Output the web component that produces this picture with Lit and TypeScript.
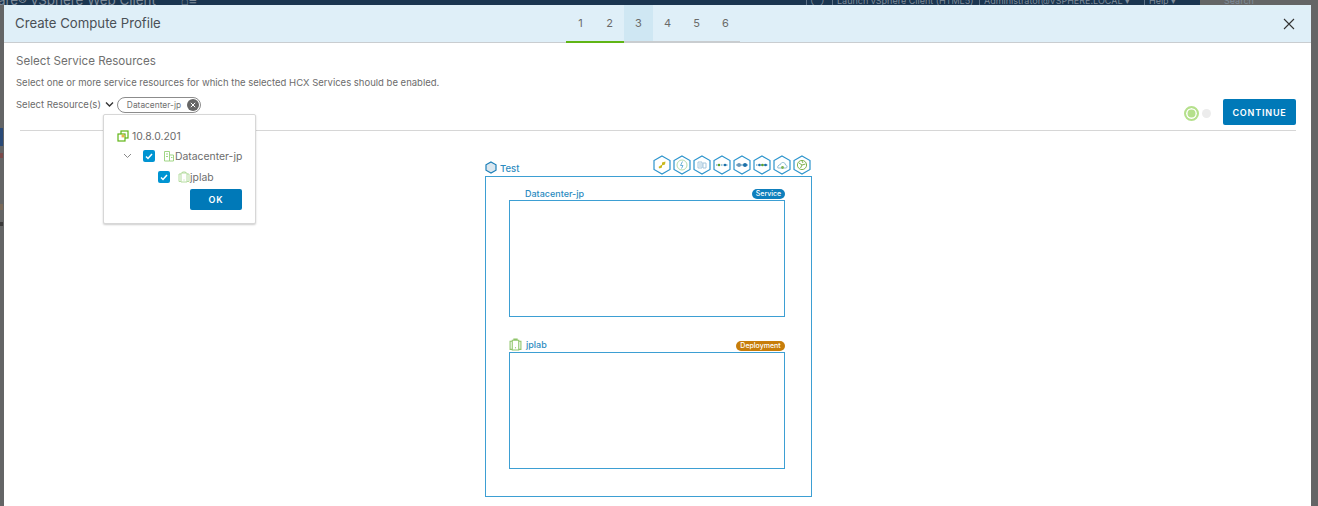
import { LitElement, html, css, svg } from 'lit';
import { customElement, state } from 'lit/decorators.js';

const HEX = 'M10 1 L18 5.5 V14.5 L10 19 L2 14.5 V5.5 Z';

// Service icons that sit on the hexagons above the compute profile box
const serviceGlyphs = [
  svg`<path d="M6.5 12 L10 9.5 L10 12.5 L7.5 13.5Z M10 7.5 L13.5 6.5 L13 9.5 L10 10.5Z" fill="#c9b81e"/>`,
  svg`<circle cx="10" cy="10" r="5" fill="none" stroke="#b5dcae"/><path d="M10.5 6.5 L8.5 10.5 H11 L9.5 13.5" fill="none" stroke="#6db2d8"/>`,
  svg`<path d="M6 7 H10 V13 H6Z M11 8 H14 V13 H11Z" fill="none" stroke="#a5c6dc"/><path d="M7 9 H9 M7 11 H9" stroke="#a5c6dc"/>`,
  svg`<path d="M4 10 H16" stroke="#3f8fbd" stroke-dasharray="1.5 1"/><circle cx="7" cy="10" r="1.3" fill="#5aa02c"/><circle cx="13" cy="10" r="1.3" fill="#1b6fa8"/>`,
  svg`<path d="M4 10 H16" stroke="#3f8fbd"/><circle cx="7" cy="10" r="2" fill="#6d97b8"/><circle cx="13" cy="10" r="2" fill="#1b6fa8"/>`,
  svg`<path d="M4 10 H16" stroke="#3f8fbd" stroke-dasharray="1.5 1"/><circle cx="7.5" cy="10" r="1.3" fill="#1b6fa8"/><circle cx="10.5" cy="10" r="1.3" fill="#5aa02c"/><circle cx="13.5" cy="10" r="1.3" fill="#1b6fa8"/>`,
  svg`<path d="M6 13 H14 C15.5 13 15.5 10 13.5 10 C13.5 7 9 6.5 8.5 9.5 C6 9.5 5 13 6 13Z" fill="none" stroke="#8fbdd4"/><circle cx="10.5" cy="12.5" r="1.4" fill="#7fb350"/>`,
  svg`<circle cx="10" cy="10" r="4.6" fill="none" stroke="#7fb350"/><path d="M7 8 L10 10 L8.5 13 M10 10 L13.5 9 M10 6 L11 8" fill="none" stroke="#7fb350"/>`,
];

@customElement('app-root')
export class AppRoot extends LitElement {
  @state() private currentStep = 3;

  static styles = css`
    :host {
      display: block;
      position: relative;
      width: 1318px;
      height: 506px;
      overflow: hidden;
      background: #646566;
      font-family: 'Inter', 'Liberation Sans', sans-serif;
      color: #565656;
    }

    /* Page behind the dialog, dimmed */
    .topbar {
      height: 5px;
      overflow: hidden;
      background: #1a3550;
      color: #7f8b99;
      line-height: 1px;
      white-space: nowrap;
      display: flex;
    }
    .brand {
      width: 806px;
      flex: none;
      font-size: 13.4px;
      display: flex;
      gap: 25px;
    }
    .brand span:first-child {
      margin-left: -2px;
    }
    .top-link {
      flex: none;
      box-sizing: border-box;
      font-size: 9px;
      border-left: 1px solid #5d7186;
      padding-left: 4px;
    }
    .search {
      width: 118px;
      flex: none;
      box-sizing: border-box;
      padding-left: 24px;
      background: #646566;
      font-size: 9px;
    }
    .edge-bit {
      position: absolute;
      left: 0;
      width: 3px;
    }

    .dialog {
      margin: 0 7px 0 4px;
      height: 501px;
      background: #fff;
      display: flex;
      flex-direction: column;
      position: relative;
    }

    .header {
      height: 38px;
      flex: none;
      box-sizing: border-box;
      background: #dfeff8;
      border-bottom: 1px solid #c9cdd0;
      display: grid;
      grid-template-columns: 562px auto 1fr;
      align-items: stretch;
    }
    .title {
      padding-left: 11px;
      font-size: 13.2px;
      line-height: 36px;
      color: #4a5056;
    }
    .steps {
      display: flex;
      margin-bottom: -1px;
    }
    .step {
      width: 29px;
      font-size: 11px;
      line-height: 36px;
      text-align: center;
      color: #6a6a6a;
      box-sizing: border-box;
      border-bottom: 2px solid #c9cdd0;
    }
    .step.done {
      border-bottom-color: #60b515;
    }
    .step.current {
      background: #cfe7f3;
    }
    .close {
      justify-self: end;
      align-self: center;
      margin-right: 16px;
      width: 12px;
      height: 12px;
    }

    .body {
      flex: 1;
      padding: 11px 15px 0 12px;
      position: relative;
      display: flex;
      flex-direction: column;
    }
    h2 {
      margin: 0;
      font-size: 11.6px;
      font-weight: 400;
      line-height: 15px;
      color: #707070;
    }
    .hint {
      margin: 7px 0 0;
      font-size: 9.5px;
      line-height: 14px;
      color: #6c6c6c;
    }
    .picker-row {
      display: flex;
      align-items: flex-start;
      margin-top: 7px;
      height: 33px;
    }
    .rule {
      height: 1px;
      margin-left: 4px;
      background: #d6d6d6;
      flex: none;
    }
    .picker-label {
      font-size: 9.5px;
      line-height: 16px;
      color: #6c6c6c;
    }
    .chev {
      margin: 4px 3px 0 4px;
      width: 9px;
      height: 7px;
    }
    .chip {
      height: 16px;
      box-sizing: border-box;
      border: 1px solid #8c8c8c;
      border-radius: 8px;
      padding-left: 9px;
      padding-right: 1px;
      display: flex;
      align-items: center;
      gap: 6px;
      font-size: 8.4px;
      color: #707070;
    }
    .chip svg {
      width: 12px;
      height: 12px;
    }
    .status {
      margin-left: auto;
      margin-top: 9px;
      display: flex;
      align-items: center;
      gap: 3px;
    }
    .dot-on {
      width: 11px;
      height: 11px;
      border-radius: 50%;
      background: #b5e08c;
      border: 2px solid #b5e08c;
      box-shadow: inset 0 0 0 1.5px #fff;
      box-sizing: content-box;
    }
    .dot-off {
      width: 9px;
      height: 9px;
      border-radius: 50%;
      background: #ececec;
    }
    .continue {
      margin-left: 12px;
      margin-top: 2px;
      width: 73px;
      height: 26px;
      border: 0;
      border-radius: 2px;
      background: #0079b8;
      color: #fff;
      font: 600 9px 'Inter', 'Liberation Sans', sans-serif;
      letter-spacing: 0.8px;
      padding: 0;
    }

    /* Resource tree dropdown */
    .menu {
      position: absolute;
      left: 99px;
      top: 71px;
      width: 153px;
      height: 110px;
      box-sizing: border-box;
      background: #fff;
      border: 1px solid #d7d7d7;
      border-radius: 2px;
      box-shadow: 0 1px 2px rgba(0, 0, 0, 0.2);
      padding: 14px 13px 0 13px;
      font-size: 10.4px;
      color: #6c6c6c;
      white-space: nowrap;
    }
    .tree-row {
      display: flex;
      align-items: center;
      height: 14px;
    }
    .tree-row.dc {
      margin-top: 5px;
      height: 16px;
    }
    .tree-row.cluster {
      margin-top: 5px;
      height: 16px;
      padding-left: 41px;
    }
    .tree-row svg {
      flex: none;
    }
    .vc-name {
      margin-left: 3px;
    }
    .node {
      display: flex;
      align-items: center;
      margin-left: 8px;
    }
    .tree-chev {
      margin: 0 11px 0 6px;
    }
    .check {
      width: 12px;
      height: 12px;
      border-radius: 2px;
      background: #0094d2;
      flex: none;
      display: flex;
      align-items: center;
      justify-content: center;
    }
    .ok {
      display: block;
      margin: 4px 0 0 auto;
      width: 52px;
      height: 21px;
      border: 0;
      border-radius: 2px;
      background: #0079b8;
      color: #fff;
      font: 600 9px 'Inter', 'Liberation Sans', sans-serif;
      letter-spacing: 0.8px;
      padding: 0;
    }

    /* Compute profile diagram */
    .diagram {
      width: 327px;
      margin: 23px 0 0 469px;
    }
    .diagram-head {
      height: 22px;
      display: flex;
      align-items: flex-end;
      padding-bottom: 2px;
      box-sizing: border-box;
      font-size: 9.5px;
      font-weight: 500;
      color: #2b8bc0;
      gap: 3px;
    }
    .hexes {
      margin-left: auto;
      margin-bottom: -1px;
      display: flex;
    }
    .hexes svg {
      width: 20px;
      height: 20px;
      display: block;
    }
    .outer {
      height: 321px;
      box-sizing: border-box;
      border: 1px solid #3d9fd3;
      padding: 9px 26px 0 23px;
    }
    .res-head {
      height: 14px;
      display: flex;
      align-items: center;
      font-size: 9px;
      font-weight: 500;
      color: #2b8bc0;
    }
    .res-head .name {
      margin-left: 16px;
    }
    .res-head svg + .name {
      margin-left: 4px;
    }
    .res-head.up .name,
    .res-head.up svg {
      margin-top: -2px;
    }
    .badge {
      margin-left: auto;
      margin-top: 2px;
      height: 10px;
      border-radius: 5px;
      font-size: 7px;
      line-height: 10px;
      color: #fff;
      font-weight: 500;
      text-align: center;
    }
    .badge.service {
      background: #0f7fbc;
      width: 33px;
    }
    .badge.deploy {
      background: #c77d0a;
      width: 49px;
    }
    .res-box {
      height: 117px;
      box-sizing: border-box;
      border: 1px solid #3d9fd3;
    }
    .res-gap {
      height: 21px;
    }
  `;

  private _vcenterIcon() {
    return html`<svg width="12" height="12" viewBox="0 0 12 12" fill="none" stroke="#60b515" stroke-width="1.2">
      <rect x="4" y="1" width="7" height="7" />
      <rect x="1" y="4" width="7" height="7" fill="#fff" />
      <rect x="4.6" y="4.6" width="2.8" height="2.8" fill="#e9b44c" stroke="none" />
    </svg>`;
  }

  private _datacenterIcon() {
    return html`<svg width="12" height="12" viewBox="0 0 12 12" fill="none" stroke="#a0d585">
      <path d="M1.5 1.5 H6.5 V11 H1.5Z M6.5 5 H10.5 V11 H6.5Z M3 4 H5 M3 6.5 H5 M8 7.5 H9.5" />
    </svg>`;
  }

  private _clusterIcon(color = '#b5dca0', size = 12) {
    return html`<svg width=${size} height=${size} viewBox="0 0 12 12" fill="none" stroke=${color}>
      <path d="M3 2 H9 V11 H3Z M4.5 2 V1 H7.5 V2 M3 3 H1 V10.5 H3 M9 3 H11 V10.5 H9" />
      <path d="M6 8.5 V9.5" />
    </svg>`;
  }

  private _check() {
    return html`<span class="check"
      ><svg width="8" height="7" viewBox="0 0 8 7" fill="none" stroke="#fff" stroke-width="1.5">
        <path d="M1 3.5 L3 5.5 L7 1" /></svg
    ></span>`;
  }

  render() {
    return html`
      <div class="topbar">
        <div class="brand"><span>are® vSphere Web Client</span><span>⌂≡</span></div>
        <div class="top-link" style="width:26px">◯</div>
        <div class="top-link" style="width:147px">Launch vSphere Client (HTML5)</div>
        <div class="top-link" style="width:165px">Administrator@VSPHERE.LOCAL ▾</div>
        <div class="top-link" style="width:56px">Help ▾</div>
        <div class="search">Search</div>
      </div>
      <div class="edge-bit" style="top:128px;height:18px;background:#2a4a78"></div>
      <div class="edge-bit" style="top:153px;height:5px;background:#7a4a4a"></div>
      <div class="edge-bit" style="top:204px;height:6px;background:#7a6a5a"></div>
      <div class="edge-bit" style="top:222px;height:4px;background:#3a3a3a"></div>
      <div class="dialog">
        <div class="header">
          <div class="title">Create Compute Profile</div>
          <div class="steps">
            ${[1, 2, 3, 4, 5, 6].map(
              (n) => html`<div
                class="step ${n < this.currentStep ? 'done' : ''} ${n === this.currentStep ? 'current' : ''}"
              >
                ${n}
              </div>`
            )}
          </div>
          <svg class="close" viewBox="0 0 12 12" fill="none" stroke="#333" stroke-width="1.1">
            <path d="M1 1 L11 11 M11 1 L1 11" />
          </svg>
        </div>
        <div class="body">
          <h2>Select Service Resources</h2>
          <p class="hint">Select one or more service resources for which the selected HCX Services should be enabled.</p>
          <div class="picker-row">
            <span class="picker-label">Select Resource(s)</span>
            <svg class="chev" viewBox="0 0 9 7" fill="none" stroke="#333" stroke-width="1.4">
              <path d="M1 1.5 L4.5 5 L8 1.5" />
            </svg>
            <div class="chip">
              Datacenter-jp
              <svg viewBox="0 0 12 12">
                <circle cx="6" cy="6" r="6" fill="#666" />
                <path d="M3.8 3.8 L8.2 8.2 M8.2 3.8 L3.8 8.2" stroke="#fff" />
              </svg>
            </div>
            <div class="status"><div class="dot-on"></div><div class="dot-off"></div></div>
            <button class="continue">CONTINUE</button>
          </div>
          <div class="rule"></div>

          <div class="diagram">
            <div class="diagram-head">
              <svg width="12" height="13" viewBox="0 0 12 13">
                <path d="M6 1 L11 3.8 V9.2 L6 12 L1 9.2 V3.8 Z" fill="#dbe7ef" stroke="#1b7fb8" stroke-width="1.2" />
              </svg>
              <span>Test</span>
              <div class="hexes">
                ${serviceGlyphs.map(
                  (g) => html`<svg viewBox="0 0 20 20">
                    <path d=${HEX} fill="#fff" stroke="#2d94cc" stroke-width="1.2" />
                    ${g}
                  </svg>`
                )}
              </div>
            </div>
            <div class="outer">
              <div class="res-head">
                <span class="name">Datacenter-jp</span>
                <span class="badge service">Service</span>
              </div>
              <div class="res-box"></div>
              <div class="res-gap"></div>
              <div class="res-head up">
                ${this._clusterIcon('#8fc46a', 13)}
                <span class="name">jplab</span>
                <span class="badge deploy">Deployment</span>
              </div>
              <div class="res-box"></div>
            </div>
          </div>

          <div class="menu">
            <div class="tree-row">${this._vcenterIcon()}<span class="vc-name">10.8.0.201</span></div>
            <div class="tree-row dc">
              <svg class="tree-chev" width="9" height="6" viewBox="0 0 9 6" fill="none" stroke="#888">
                <path d="M1 1 L4.5 4.5 L8 1" />
              </svg>
              ${this._check()}
              <span class="node">${this._datacenterIcon()}Datacenter-jp</span>
            </div>
            <div class="tree-row cluster">
              ${this._check()}
              <span class="node">${this._clusterIcon()}jplab</span>
            </div>
            <button class="ok">OK</button>
          </div>
        </div>
      </div>
    `;
  }
}
